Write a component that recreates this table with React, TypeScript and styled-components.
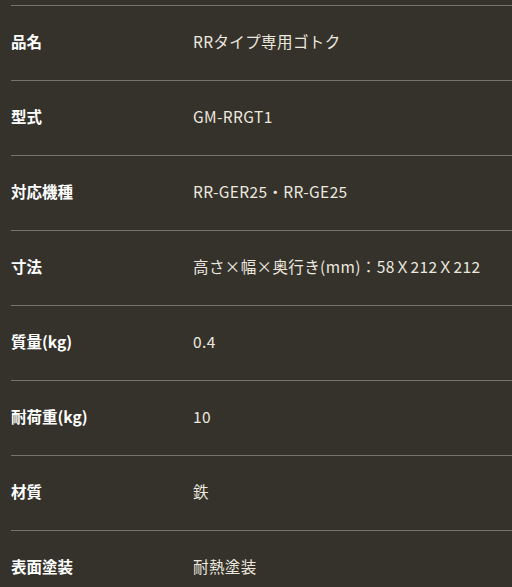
import styled, { createGlobalStyle } from "styled-components";

const GlobalStyle = createGlobalStyle`
  html, body {
    margin: 0;
    padding: 0;
    background: #35322c;
  }

  body {
    font-family: "Noto Sans CJK JP", "Noto Sans", sans-serif;
  }
`;

const SpecList = styled.dl`
  margin: 0;
  padding: 5px 0 0 11px;
`;

const Row = styled.div`
  display: grid;
  grid-template-columns: 182px 1fr;
  align-items: center;
  height: 75px;
  padding-bottom: 4px;
  box-sizing: border-box;

  border-top: 1px solid #77726a;
`;

const Label = styled.dt`
  margin: 0;
  font-size: 15.5px;
  font-weight: 700;
  color: #ffffff;
`;

const Value = styled.dd`
  margin: 0;
  font-size: 15.5px;
  color: #ece8df;
  letter-spacing: 0.025em;
`;

const specs = [
  { label: "品名", value: "RRタイプ専用ゴトク" },
  { label: "型式", value: "GM-RRGT1" },
  { label: "対応機種", value: "RR-GER25・RR-GE25" },
  { label: "寸法", value: "高さ×幅×奥行き(mm)：58Ｘ212Ｘ212" },
  { label: "質量(kg)", value: "0.4" },
  { label: "耐荷重(kg)", value: "10" },
  { label: "材質", value: "鉄" },
  { label: "表面塗装", value: "耐熱塗装" },
];

export default function App() {
  return (
    <>
      <GlobalStyle />
      <SpecList>
        {specs.map((spec) => (
          <Row key={spec.label}>
            <Label>{spec.label}</Label>
            <Value>{spec.value}</Value>
          </Row>
        ))}
      </SpecList>
    </>
  );
}
